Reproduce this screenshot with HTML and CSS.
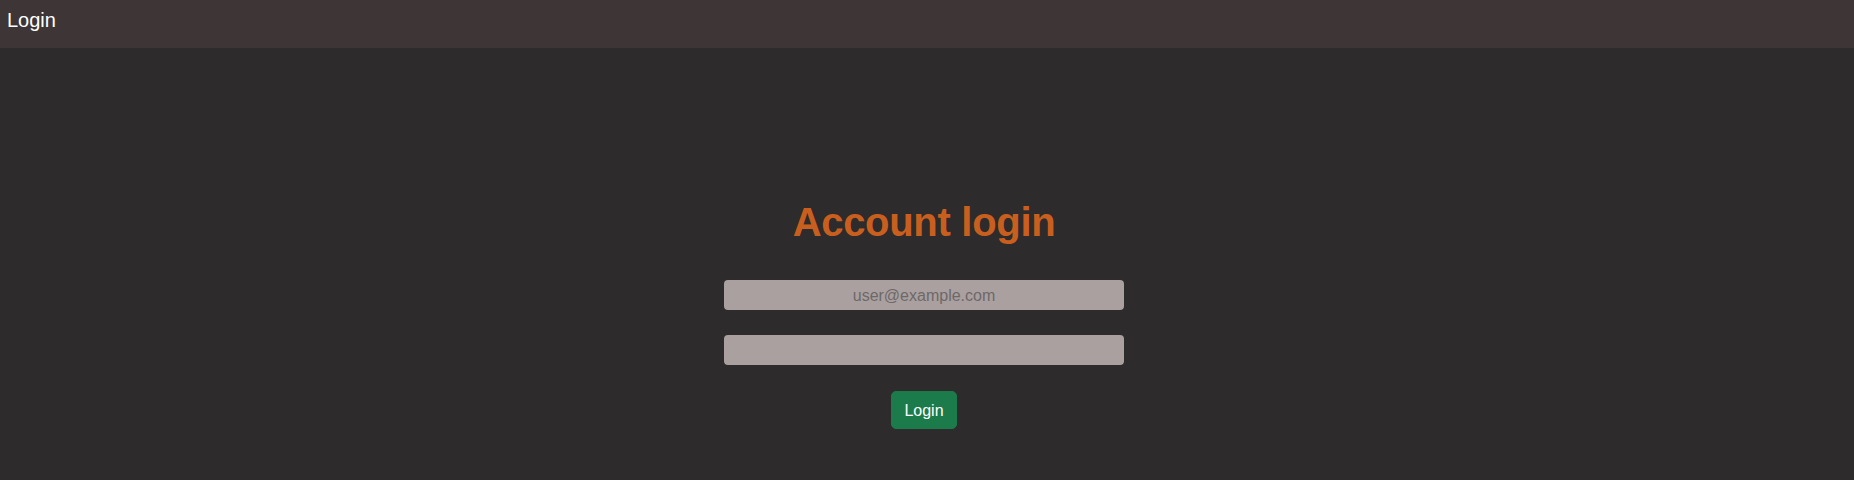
FILE: index.html
```html
<!DOCTYPE html>
<html lang="en">
<head>
<meta charset="utf-8">
<title>Login</title>
<link rel="stylesheet" href="styles.css">
</head>
<body>
<header class="topbar">Login</header>
<main class="main">
  <form class="login-form">
    <h1 class="title">Account login</h1>
    <input class="field" type="email" placeholder="user@example.com">
    <input class="field" type="password">
    <button class="btn" type="button">Login</button>
  </form>
</main>
</body>
</html>
```
FILE: styles.css
```css
html, body {
  margin: 0;
  padding: 0;
  height: 100%;
}
body {
  background: #2e2b2c;
  font-family: "Liberation Sans", Arial, sans-serif;
  color: #fff;
}
.topbar {
  box-sizing: border-box;
  height: 48px;
  background: #3e3536;
  padding: 9px 7px 0;
  font-size: 20px;
  color: #fff;
}
.main {
  display: flex;
  justify-content: center;
  padding-top: 150px;
  padding-right: 6px;
}
.login-form {
  display: flex;
  flex-direction: column;
  align-items: center;
  width: 400px;
}
.title {
  margin: 0 0 34px;
  font-size: 40px;
  line-height: 48px;
  font-weight: bold;
  color: #c95f1e;
  letter-spacing: -0.3px;
}
.field {
  box-sizing: border-box;
  width: 400px;
  height: 30px;
  margin: 0 0 25px;
  padding: 2px 0 0;
  border: none;
  border-radius: 4px;
  background: #aaa09f;
  font-family: "Liberation Sans", Arial, sans-serif;
  font-size: 16px;
  text-align: center;
  color: #333;
  outline: none;
}
.field::placeholder {
  color: #6d6969;
}
.field + .field {
  margin-bottom: 26px;
}
.btn {
  box-sizing: border-box;
  height: 38px;
  padding: 2px 12px 0;
  border: 1px solid #1b7b4b;
  border-radius: 5px;
  background: #1b7b4b;
  color: #fff;
  font-family: "Liberation Sans", Arial, sans-serif;
  font-size: 16px;
}
```
